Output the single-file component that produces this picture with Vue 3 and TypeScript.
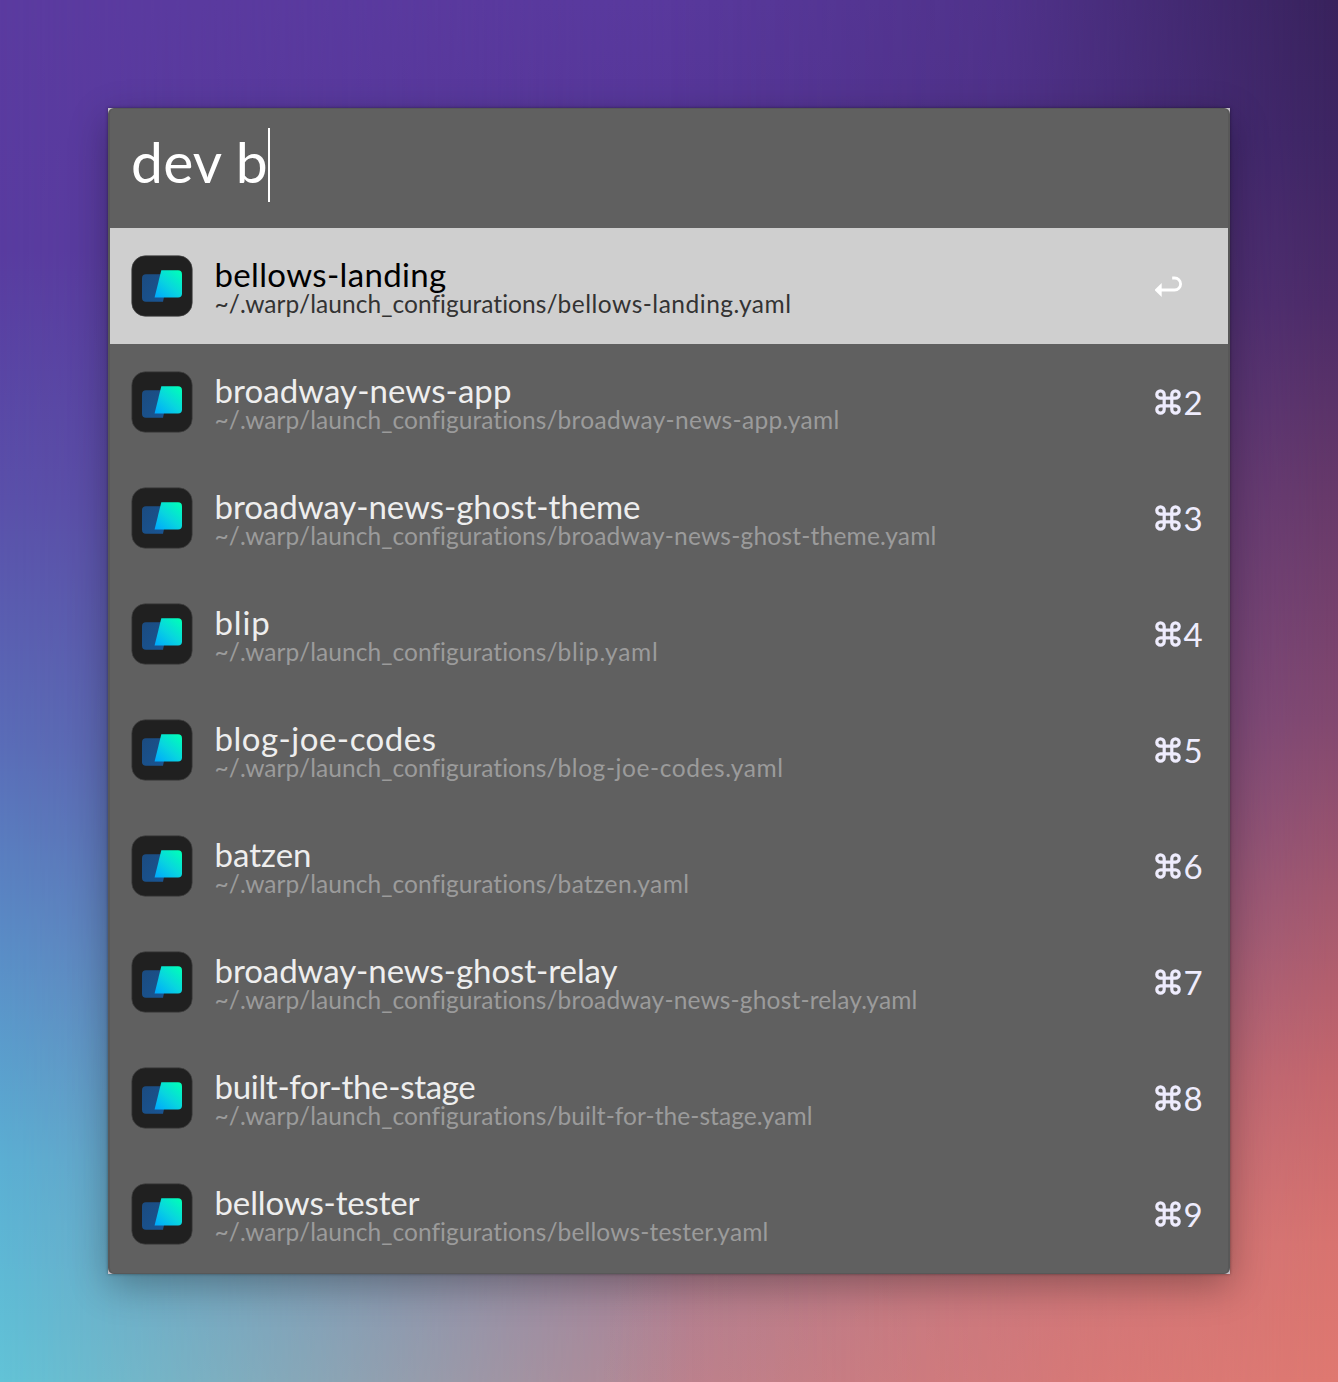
<script setup lang="ts">
import { onMounted, ref } from 'vue'

interface Row {
  title: string
  titleWidth: number
  pathWidth: number
  key: string
}

const query = 'dev b'
const folder = '~/.warp/launch_configurations/'
const folderWidth = 343
const rows: Row[] = [
  { title: 'bellows-landing', titleWidth: 232, pathWidth: 577, key: '' },
  { title: 'broadway-news-app', titleWidth: 297, pathWidth: 625, key: '2' },
  { title: 'broadway-news-ghost-theme', titleWidth: 426, pathWidth: 722, key: '3' },
  { title: 'blip', titleWidth: 56, pathWidth: 444, key: '4' },
  { title: 'blog-joe-codes', titleWidth: 222, pathWidth: 569, key: '5' },
  { title: 'batzen', titleWidth: 97, pathWidth: 475, key: '6' },
  { title: 'broadway-news-ghost-relay', titleWidth: 403, pathWidth: 703, key: '7' },
  { title: 'built-for-the-stage', titleWidth: 261, pathWidth: 598, key: '8' },
  { title: 'bellows-tester', titleWidth: 205, pathWidth: 554, key: '9' },
]

const root = ref<HTMLElement | null>(null)

// Tracks each label so that it fills its nominal width.
onMounted(() => {
  root.value?.querySelectorAll<HTMLElement>('[data-fit]').forEach((el) => {
    const target = Number(el.dataset.fit)
    const count = (el.textContent ?? '').length
    el.style.letterSpacing = `${(target - el.getBoundingClientRect().width) / count}px`
  })
})
</script>

<template>
  <main ref="root" class="desktop">
    <div class="wash middle"></div>
    <div class="wash glow"></div>
    <div class="wash right"></div>
    <section class="shell">
      <div class="panel">
        <header class="search">
          <span class="query" data-fit="137">{{ query }}</span><span class="caret"></span>
        </header>
        <ul class="list">
          <li v-for="(row, i) in rows" :key="row.title" class="row" :class="{ active: i === 0 }">
            <svg class="logo" viewBox="0 0 62 62" width="62" height="62">
              <defs>
                <linearGradient :id="`front${i}`" x1="0" y1="1" x2="0.9" y2="0">
                  <stop offset="0" stop-color="#00a6ff" />
                  <stop offset="0.5" stop-color="#08d5df" />
                  <stop offset="1" stop-color="#00ffb8" />
                </linearGradient>
                <linearGradient :id="`back${i}`" x1="0" y1="0" x2="1" y2="1">
                  <stop offset="0" stop-color="#1b4b80" />
                  <stop offset="1" stop-color="#195593" />
                </linearGradient>
              </defs>
              <rect x="0.8" y="0.8" width="60.4" height="60.4" rx="13.5" fill="#202020" stroke="#444" stroke-width="0.7" />
              <path d="M15 19.3H34L33 42L32 46.8H15Q11 46.8 11 42.8V23.3Q11 19.3 15 19.3Z" :fill="`url(#back${i})`" />
              <path d="M30.3 15.2H47Q51 15.2 51 19.2V38.5Q51 42.5 47 42.5H23.6Z" :fill="`url(#front${i})`" />
            </svg>
            <div class="labels">
              <div><span class="title" :data-fit="row.titleWidth">{{ row.title }}</span></div>
              <div class="sub"><span class="path" :data-fit="folderWidth">{{ folder }}</span><span class="path" :data-fit="row.pathWidth - folderWidth">{{ row.title }}.yaml</span></div>
            </div>
            <div class="shortcut">
              <svg v-if="i === 0" width="28" height="24" viewBox="0 0 28 24">
                <path d="M17.2 2H19.6A5.7 5.7 0 0 1 19.6 14H6" fill="none" stroke="#fff" stroke-width="2.8" />
                <path d="M-0.6 14L6.7 7V21Z" fill="#fff" />
              </svg>
              <template v-else>
                <svg width="26" height="26" viewBox="0 0 26 26" fill="none" stroke="#eeecfd" stroke-width="3.2">
                  <path d="M9.2 9.2V5.5A3.7 3.7 0 1 0 5.5 9.2H20.5A3.7 3.7 0 1 0 16.8 5.5V20.5A3.7 3.7 0 1 0 20.5 16.8H5.5A3.7 3.7 0 1 0 9.2 20.5Z" />
                </svg>
                <span class="digit">{{ row.key }}</span>
              </template>
            </div>
          </li>
        </ul>
      </div>
    </section>
  </main>
</template>

<style>
body {
  margin: 0;
}
</style>

<style scoped>
.desktop {
  position: relative;
  box-sizing: border-box;
  width: 1338px;
  height: 1382px;
  padding: 108px;
  overflow: hidden;
  font-family: Lato, "Noto Sans", sans-serif;
  background: linear-gradient(180deg, #5b3ba0 0%, #593ca0 18%, #5a50aa 36%, #5a6db8 54%, #5a8cc6 68%, #5bafd3 84%, #62c3d7 100%);
}
.wash {
  position: absolute;
  inset: 0;
}
.middle {
  background: linear-gradient(180deg, #59399d 0%, #563698 10%, #6a5090 60%, #ac8094 92%, #b88390 100%);
  mask-image: linear-gradient(90deg, transparent 0%, #000 52%);
}
.glow {
  background: radial-gradient(ellipse 520px 480px at 1120px 1400px, rgba(214, 118, 120, 0.85), rgba(214, 118, 120, 0.6) 35%, rgba(214, 118, 120, 0.22) 70%, rgba(214, 118, 120, 0));
}
.right {
  background: linear-gradient(180deg, #38225c 0%, #3d2562 10%, #4c2b67 22%, #673969 36%, #82486f 52%, #a3586e 65%, #c5666c 78%, #d8736f 90%, #df7870 100%);
  mask-image: linear-gradient(90deg, transparent 50%, rgba(0, 0, 0, 0.28) 75%, rgba(0, 0, 0, 0.65) 88%, #000 100%);
}
.shell {
  position: relative;
  width: 1122px;
  height: 1166px;
  background: #c5c0c8;
  box-shadow: 0 12px 36px rgba(0, 0, 0, 0.3), 0 0 3px rgba(0, 0, 0, 0.4);
}
.panel {
  box-sizing: border-box;
  height: 1166px;
  border: 2px solid #585858;
  border-top-width: 1px;
  border-bottom-width: 1px;
  border-radius: 6px;
  background: #606060;
}
.search {
  display: flex;
  height: 119px;
  padding: 19px 0 0 21px;
  box-sizing: border-box;
}
.query {
  height: 74px;
  font-size: 57px;
  line-height: 66px;
  color: #fff;
  white-space: pre;
}
.caret {
  width: 2px;
  height: 74px;
  background: #fff;
}
.list {
  margin: 0;
  padding: 0;
  list-style: none;
}
.row {
  display: flex;
  height: 116px;
  box-sizing: border-box;
  padding: 27px 0 0 21px;
  color: #eee;
}
.row.active {
  background: #cfcfcf;
  color: #000;
}
.logo {
  flex: none;
}
.labels {
  flex: 1;
  padding-left: 21.5px;
  white-space: nowrap;
}
.title {
  display: inline-block;
  font-size: 33px;
  line-height: 38px;
  height: 35px;
  vertical-align: top;
}
.labels > div {
  height: 35px;
}
.labels > .sub {
  height: 28px;
}
.path {
  display: inline-block;
  font-size: 24.5px;
  line-height: 28px;
  color: #9b9b9b;
  vertical-align: top;
}
.active .path {
  color: #333;
}
.shortcut {
  display: flex;
  align-items: flex-start;
  width: 73px;
  padding-top: 18px;
  color: #eeecfd;
}
.active .shortcut {
  padding-top: 21px;
}
.digit {
  margin-left: 2.5px;
  font-size: 33px;
  line-height: 26px;
}
</style>
